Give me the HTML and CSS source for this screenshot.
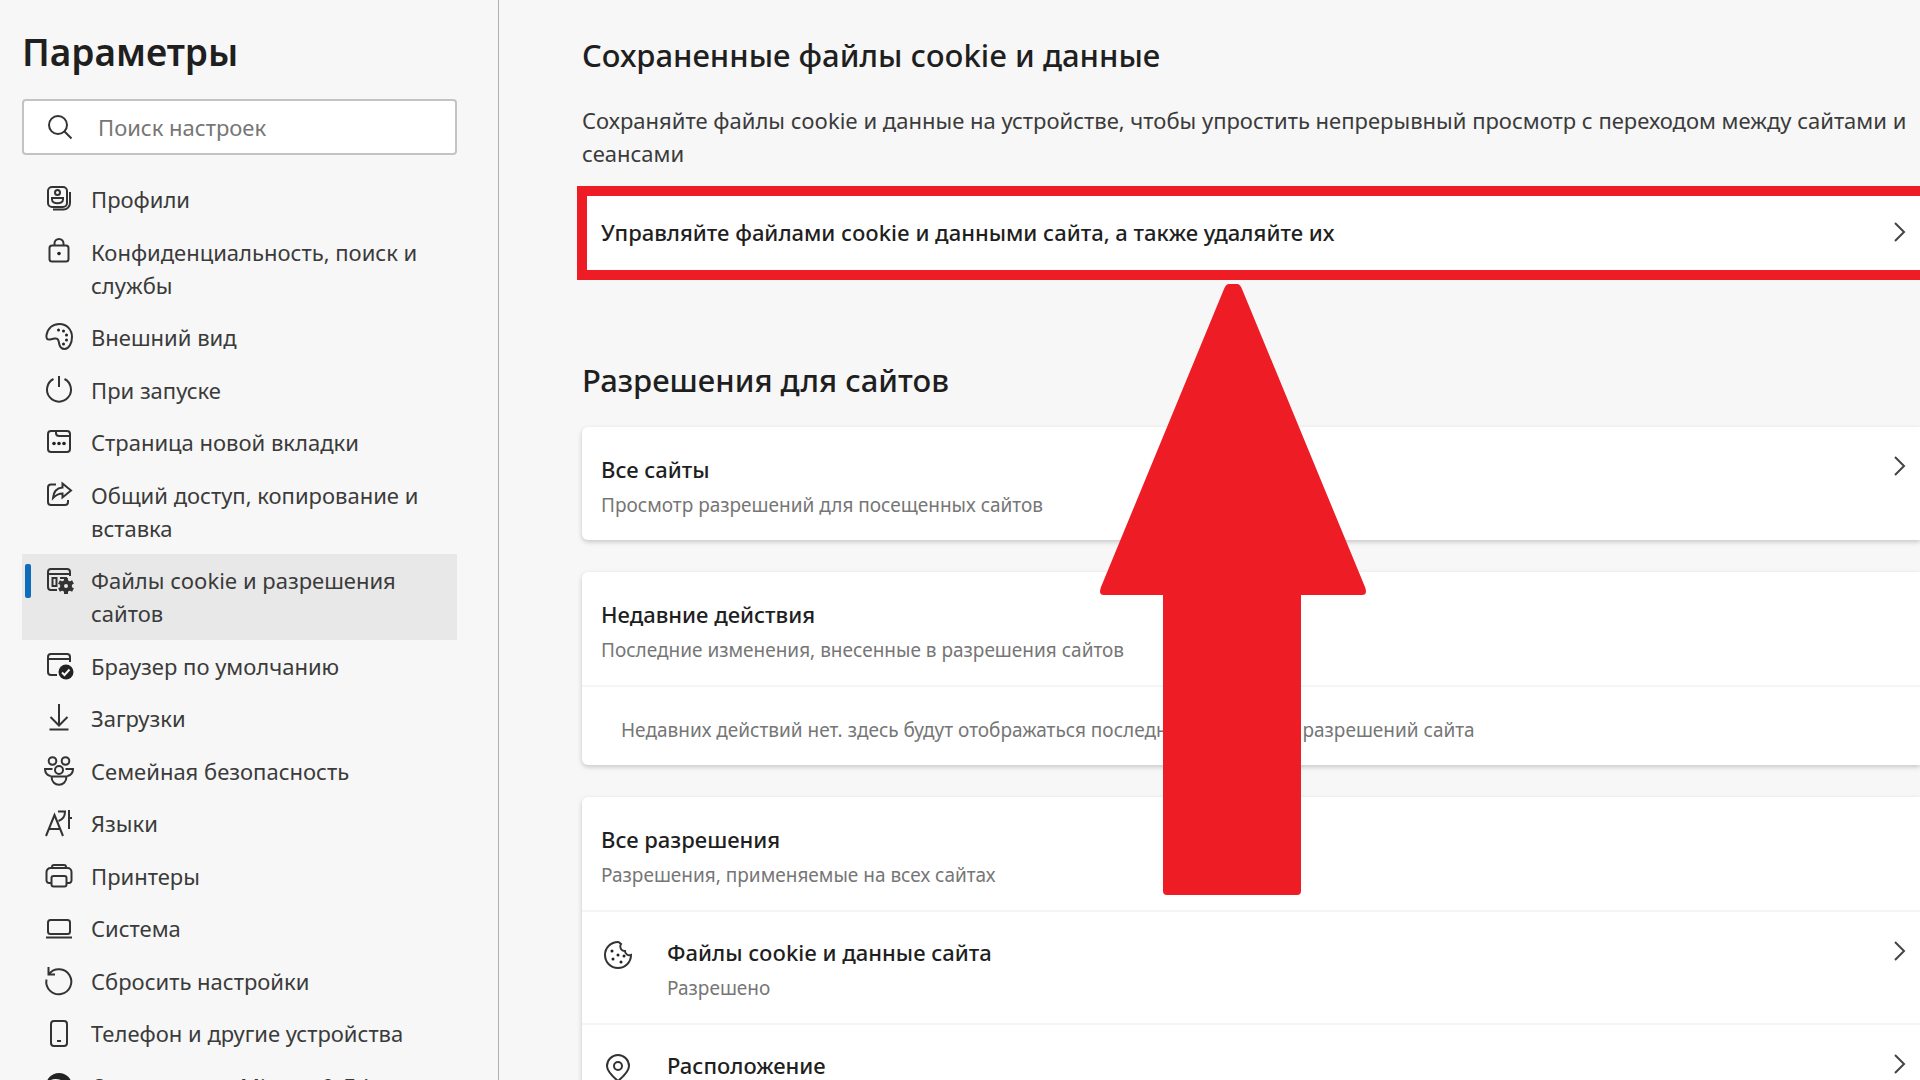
FILE: index.html
```html
<!DOCTYPE html>
<html lang="ru">

<head>
    <meta charset="UTF-8">
    <meta name="viewport" content="width=device-width, initial-scale=1.0">
    <title>Параметры</title>
    <link rel="stylesheet" href="styles.css">
</head>

<body>
    <aside class="sidebar">
        <h1>Параметры</h1>

        <label class="search">
            <svg class="icon" viewBox="0 0 28 28"><circle cx="12" cy="12" r="9"/><path d="M18.500 18.500l7 7"/></svg>
            <input type="search" placeholder="Поиск настроек" aria-label="Поиск настроек">
        </label>

        <nav class="menu">
            <a href="#profiles">
                <svg class="icon" viewBox="0 0 28 28"><rect x="3" y="2" width="19" height="20" rx="4"/><circle cx="12.500" cy="7.500" r="2.500"/><path d="M7 13h11v1.500c0 5-11 5-11 0z"/><path d="M25 7v11a6.500 6.500 0 0 1-6.500 6.500H8"/></svg>
                <span>Профили</span>
            </a>
            <a href="#privacy">
                <svg class="icon" viewBox="0 0 28 28"><rect x="4.500" y="7.500" width="19" height="16" rx="2.500"/><path d="M9.500 7.500V5.500a4.500 4.500 0 0 1 9 0v2"/><circle class="dot" cx="14" cy="15.500" r="1.800"/></svg>
                <span>Конфиденциальность, поиск и службы</span>
            </a>
            <a href="#appearance">
                <svg class="icon" viewBox="0 0 28 28"><path d="M1.500 12C3 5 8 1 14.500 1 22 1 27 7 27 14c0 6-3 12-7.500 12-4 0-5-3-5.500-6-.500-4-2-5-4.500-4.500L5 16.500C2 17 1 15 1.500 12z"/><g class="dot"><circle cx="13.500" cy="7" r="1.500"/><circle cx="18.500" cy="8" r="1.500"/><circle cx="21.500" cy="12" r="1.500"/><circle cx="21.500" cy="17" r="1.500"/><circle cx="18.500" cy="21" r="1.500"/></g></svg>
                <span>Внешний вид</span>
            </a>
            <a href="#startup">
                <svg class="icon" viewBox="0 0 28 28"><path d="M14 0v11M8.500 3a12 12 0 1 0 11 0"/></svg>
                <span>При запуске</span>
            </a>
            <a href="#newtab">
                <svg class="icon" viewBox="0 0 28 28"><rect x="3" y="3" width="22" height="21" rx="3"/><path d="M11 3v2a3 3 0 0 0 3 3h11"/><g class="dot"><circle cx="9" cy="15.500" r="1.800"/><circle cx="14" cy="15.500" r="1.800"/><circle cx="19" cy="15.500" r="1.800"/></g></svg>
                <span>Страница новой вкладки</span>
            </a>
            <a href="#share">
                <svg class="icon" viewBox="0 0 28 28"><path d="M11 3.500H6a3 3 0 0 0-3 3V21a3 3 0 0 0 3 3h14a3 3 0 0 0 3-3v-2"/><path d="M17.500 2.500L26 9.500l-8.500 7v-4c-4 0-7 2-9.500 4.500C8.500 11 12 7 17.500 6.500z"/></svg>
                <span>Общий доступ, копирование и вставка</span>
            </a>
            <a href="#cookies" class="active">
                <svg class="icon" viewBox="0 0 28 28"><path d="M25 10V6a3 3 0 0 0-3-3H6a3 3 0 0 0-3 3v15a3 3 0 0 0 3 3h6M3 8h22M7.500 12h4v8h-4zM15 12h7"/><circle cx="21" cy="20" r="4" stroke-width="4"/><path d="M21 12v4M21 24v4M14 16l4 2M24 22l4 2M14 24l4-2M24 18l4-2" stroke-width="4"/></svg>
                <span>Файлы cookie и разрешения сайтов</span>
            </a>
            <a href="#default">
                <svg class="icon" viewBox="0 0 28 28"><path d="M25 10V5a3 3 0 0 0-3-3H6a3 3 0 0 0-3 3v15a3 3 0 0 0 3 3h6M3 7h22"/><circle class="dot" cx="21" cy="20" r="7.500"/><path class="tick" d="M17 20.500l2.500 2.500 5-5.500"/></svg>
                <span>Браузер по умолчанию</span>
            </a>
            <a href="#downloads">
                <svg class="icon" viewBox="0 0 28 28"><path d="M14 0v21M5.500 13l8.500 8.500 8.500-8.500M4.500 25.500h19"/></svg>
                <span>Загрузки</span>
            </a>
            <a href="#family">
                <svg class="icon" viewBox="0 0 28 28"><circle cx="7.500" cy="4" r="3.800"/><circle cx="20.500" cy="4" r="3.800"/><circle cx="14" cy="13" r="4"/><path d="M5.500 19C1.500 18 0 15.500 0 12h7.500M22.500 19c4-1 5.500-3.500 5.500-7h-7.500M6.500 19.500h15c0 11-15 11-15 0z"/></svg>
                <span>Семейная безопасность</span>
            </a>
            <a href="#languages">
                <svg class="icon" viewBox="0 0 28 28"><path d="M1 27L9.500 6 18 27M4.500 20h10M13 2.500h7c0 5-2 8-6.500 9.500M24 1v19M24 9h3"/></svg>
                <span>Языки</span>
            </a>
            <a href="#printers">
                <svg class="icon" viewBox="0 0 28 28"><path d="M7 21H4a2.500 2.500 0 0 1-2.500-2.500V10A4 4 0 0 1 5.500 6h17a4 4 0 0 1 4 4v8.500A2.500 2.500 0 0 1 24 21h-3M7 6V5a2 2 0 0 1 2-2h10a2 2 0 0 1 2 2v1"/><rect x="6.500" y="14" width="15" height="10.500" rx="2"/></svg>
                <span>Принтеры</span>
            </a>
            <a href="#system">
                <svg class="icon" viewBox="0 0 28 28"><rect x="3" y="6" width="22" height="14" rx="2.500"/><path d="M1 23.500h26"/></svg>
                <span>Система</span>
            </a>
            <a href="#reset">
                <svg class="icon" viewBox="0 0 28 28"><path d="M3.500 0v7.500H10M4 7A12.500 12.500 0 1 1 1.500 12.500"/></svg>
                <span>Сбросить настройки</span>
            </a>
            <a href="#phone">
                <svg class="icon" viewBox="0 0 28 28"><rect x="6" y="2" width="16" height="25" rx="3"/><path d="M12 22h4"/></svg>
                <span>Телефон и другие устройства</span>
            </a>
            <a href="#about">
                <svg class="icon" viewBox="0 0 28 28"><circle class="dot" cx="14" cy="14" r="13"/><path class="tick" d="M2 13c5-8 18-6 17 3"/></svg>
                <span>О программе Microsoft Edge</span>
            </a>
        </nav>
    </aside>

    <main class="content">
        <h2>Сохраненные файлы cookie и данные</h2>
        <p class="intro">Сохраняйте файлы cookie и данные на устройстве, чтобы упростить непрерывный просмотр с переходом между сайтами и сеансами</p>

        <a href="#manage" class="manage">
            <span>Управляйте файлами cookie и данными сайта, а также удаляйте их</span>
            <svg class="chevron" viewBox="0 0 12 20"><path d="M1 1l9 9-9 9"/></svg>

            <svg class="arrow" viewBox="0 0 266 612"><path d="M129 0h8q3 0 5 5l123 298q3 8-3 8h-61v296q0 4-4 4H67q-4 0-4-4V311H4q-6 0-3-8L124 5q2-5 5-5z"/></svg>
        </a>

        <h2>Разрешения для сайтов</h2>

        <section class="card">
            <a href="#all" class="row">
                <div>
                    <h3>Все сайты</h3>
                    <p>Просмотр разрешений для посещенных сайтов</p>
                </div>
                <svg class="chevron" viewBox="0 0 12 20"><path d="M1 1l9 9-9 9"/></svg>
            </a>
        </section>

        <section class="card">
            <div class="row">
                <div>
                    <h3>Недавние действия</h3>
                    <p>Последние изменения, внесенные в разрешения сайтов</p>
                </div>
            </div>
            <p class="empty">Недавних действий нет. здесь будут отображаться последние изменения разрешений сайта</p>
        </section>

        <section class="card">
            <div class="row">
                <div>
                    <h3>Все разрешения</h3>
                    <p>Разрешения, применяемые на всех сайтах</p>
                </div>
            </div>
            <a href="#cookie-data" class="row permission">
                <svg class="icon" viewBox="0 0 28 28"><path d="M14 1a13 13 0 1 0 13 13c-3 1-6-1-6-4-4 0-6-4-4-7-1-1-2-2-3-2z"/><g class="dot"><circle cx="8" cy="10" r="1.500"/><circle cx="14" cy="14" r="1.500"/><circle cx="9" cy="18" r="1.500"/><circle cx="17" cy="21" r="1.500"/><circle cx="20" cy="15" r="1.500"/></g></svg>
                <div>
                    <h3>Файлы cookie и данные сайта</h3>
                    <p>Разрешено</p>
                </div>
                <svg class="chevron" viewBox="0 0 12 20"><path d="M1 1l9 9-9 9"/></svg>
            </a>
            <a href="#location" class="row permission">
                <svg class="icon" viewBox="0 0 28 28"><path d="M14 27C8 22 3 17 3 12a11 11 0 0 1 22 0c0 5-5 10-11 15z"/><circle cx="14" cy="12" r="4"/></svg>
                <div>
                    <h3>Расположение</h3>
                </div>
                <svg class="chevron" viewBox="0 0 12 20"><path d="M1 1l9 9-9 9"/></svg>
            </a>
        </section>
    </main>
</body>

</html>
```
FILE: styles.css
```css
* {
    box-sizing: border-box;
}

body {
    display: flex;
    height: 100vh;
    margin: 0;
    overflow: hidden;
    background-color: #f7f7f7;
    color: #3b3b3b;
    font-family: "Noto Sans", "Open Sans", sans-serif;
    font-size: 22px;
    line-height: 33px;
}

h1,
h2,
h3,
p {
    margin: 0;
}

h1,
h2,
h3 {
    color: #1f1f1f;
    font-weight: 500;
}

a {
    color: inherit;
    text-decoration: none;
}

.icon {
    flex: none;
    width: 28px;
    height: 28px;
    fill: none;
    stroke: #333;
    stroke-width: 2;
    overflow: visible;
}

.icon .dot {
    fill: #222;
    stroke: none;
}

.icon .tick {
    stroke: #f7f7f7;
}

.sidebar {
    flex: none;
    width: 499px;
    padding: 25px 41px 0 22px;
    border-right: 1px solid #b0b0b0;
}

h1 {
    font-size: 37px;
    font-weight: 600;
    line-height: 54px;
}

.search {
    display: flex;
    align-items: center;
    gap: 24px;
    height: 56px;
    margin: 20px 0 18px;
    padding: 0 22px;
    background-color: #fff;
    border: 2px solid #c3c3c3;
    border-radius: 4px;
}

.search input {
    flex: 1;
    min-width: 0;
    padding: 0;
    border: 0;
    outline: 0;
    background: none;
    font: inherit;
}

.search input::placeholder {
    color: #767676;
    opacity: 1;
}

.menu a {
    display: flex;
    align-items: flex-start;
    gap: 18px;
    padding: 10px 30px 10px 23px;
}

.menu a:nth-child(even) {
    padding-bottom: 9px;
}

.menu .icon {
    margin-top: 2px;
}

/* blue marker on the current section */
.menu .active {
    position: relative;
    background-color: #e8e8e8;
}

.menu .active::before {
    content: "";
    position: absolute;
    top: 10px;
    left: 3px;
    width: 6px;
    height: 34px;
    border-radius: 2px;
    background-color: #0f6cbd;
}

.content {
    flex: 1;
    min-width: 0;
    padding: 33px 0 0 83px;
}

h2 {
    font-size: 31px;
    line-height: 44px;
}

.intro {
    margin: 27px 0 16px;
}

.chevron {
    flex: none;
    width: 12px;
    height: 20px;
    margin-left: auto;
    fill: none;
    stroke: #444;
    stroke-width: 2;
}

.manage {
    position: relative;
    display: flex;
    align-items: center;
    height: 94px;
    margin: 0 0 78px -5px;
    padding: 0 14px 2px;
    background-color: #fff;
    border: solid #ee1c25;
    border-width: 10px 0 10px 10px;
    color: #1f1f1f;
    font-weight: 500;
}

.arrow {
    position: absolute;
    top: 88px;
    left: 513px;
    width: 266px;
    height: 612px;
    z-index: 1;
    fill: #ee1c25;
}

.card {
    margin: 25px 0 32px;
    background-color: #fff;
    border-radius: 6px 0 0 6px;
    box-shadow: 0 2px 5px rgba(0, 0, 0, 0.2);
}

.card + .card {
    margin-top: 0;
}

.row {
    display: flex;
    align-items: flex-start;
    padding: 24px 14px 18px 19px;
}

.row .chevron {
    margin-top: 5px;
}

.row p,
.empty {
    color: #767676;
    font-size: 19px;
}

h3 {
    margin-bottom: 2px;
    font-size: 22px;
    line-height: 36px;
}

.empty {
    padding: 27px 39px 18px;
}

.row + .row,
.empty {
    border-top: 2px solid #f5f5f5;
}

.row + .permission {
    padding-top: 22px;
}

.permission .icon {
    margin: 7px 35px 0 3px;
}

.permission .chevron {
    margin-top: 7px;
}
```
